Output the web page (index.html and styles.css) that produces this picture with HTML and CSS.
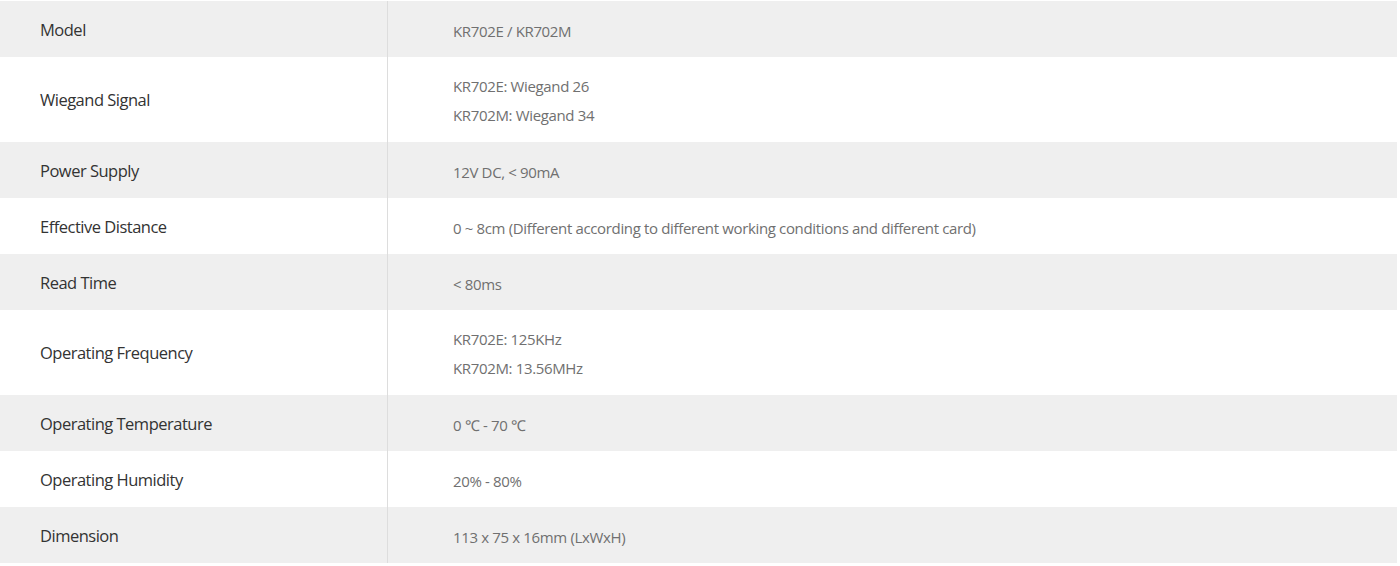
FILE: index.html
```html
<!DOCTYPE html>
<html>
<head>
<meta charset="utf-8">
<link rel="stylesheet" href="styles.css">
</head>
<body>
<table class="spec">
  <tbody>
    <tr class="odd"><th>Model</th><td>KR702E / KR702M</td></tr>
    <tr class="even tall"><th>Wiegand Signal</th><td><p>KR702E: Wiegand 26</p><p>KR702M: Wiegand 34</p></td></tr>
    <tr class="odd"><th>Power Supply</th><td>12V DC, &lt; 90mA</td></tr>
    <tr class="even"><th>Effective Distance</th><td>0 ~ 8cm (Different according to different working conditions and different card)</td></tr>
    <tr class="odd"><th>Read Time</th><td>&lt; 80ms</td></tr>
    <tr class="even tall"><th>Operating Frequency</th><td><p>KR702E: 125KHz</p><p>KR702M: 13.56MHz</p></td></tr>
    <tr class="odd"><th>Operating Temperature</th><td>0 ℃ - 70 ℃</td></tr>
    <tr class="even"><th>Operating Humidity</th><td>20% - 80%</td></tr>
    <tr class="odd"><th>Dimension</th><td>113 x 75 x 16mm (LxWxH)</td></tr>
  </tbody>
</table>
</body>
</html>
```
FILE: styles.css
```css
html, body {
  margin: 0;
  padding: 0;
  background: #ffffff;
}
.spec {
  border-collapse: collapse;
  width: 1397px;
  margin-top: 1px;
  font-family: "Open Sans", Lato, sans-serif;
}
.spec tr {
  height: 56px;
}
.spec tr.tall {
  height: 85px;
}
.spec tr.odd {
  background: #efefef;
}
.spec tr.even {
  background: #ffffff;
}
.spec th {
  width: 347px;
  padding: 0 0 0 40px;
  text-align: left;
  font-weight: normal;
  font-size: 16.5px;
  color: #333333;
  border-right: 1px solid #dddddd;
  vertical-align: middle;
  letter-spacing: -0.5px;
}
.spec td {
  padding: 3px 0 0 65px;
  font-size: 15px;
  color: #707070;
  vertical-align: middle;
  letter-spacing: -0.35px;
}
.spec td p {
  margin: 0;
  line-height: 29px;
}
```
